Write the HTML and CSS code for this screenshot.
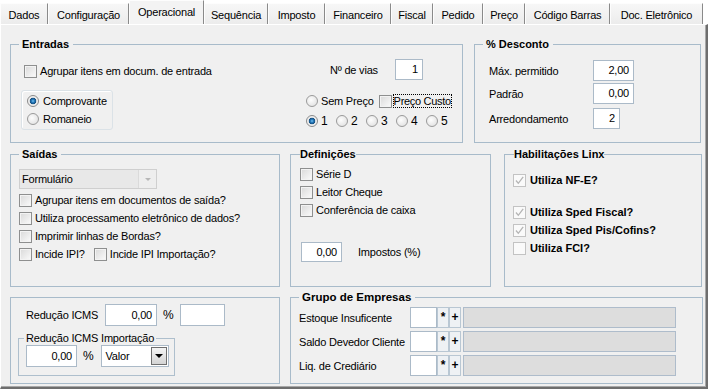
FILE: index.html
```html
<!DOCTYPE html>
<html lang="pt-BR">
<head>
    <meta charset="UTF-8">
    <title>Parâmetros - Operacional</title>
    <link rel="stylesheet" href="styles.css">
</head>
<body>
    <div class="window">
        <div class="tabs">
            <div class="tab">Dados</div>
            <div class="tab">Configuração</div>
            <div class="tab active">Operacional</div>
            <div class="tab">Sequência</div>
            <div class="tab">Imposto</div>
            <div class="tab">Financeiro</div>
            <div class="tab">Fiscal</div>
            <div class="tab">Pedido</div>
            <div class="tab">Preço</div>
            <div class="tab">Código Barras</div>
            <div class="tab">Doc. Eletrônico</div>
        </div>

        <div class="panel">
            <!-- linha 1 -->
            <div class="row row-top">
                <fieldset class="group g-entradas">
                    <legend>Entradas</legend>
                    <div class="ent-body">
                        <div class="ent-left">
                            <label class="chk pad3"><span class="box"></span>Agrupar itens em docum. de entrada</label>
                            <div class="radio-box">
                                <label class="opt"><span class="radio on"></span>Comprovante</label>
                                <label class="opt"><span class="radio"></span>Romaneio</label>
                            </div>
                        </div>
                        <div class="ent-right">
                            <div class="vias">
                                <span class="vias-label">Nº de vias</span>
                                <span class="field num w-vias">1</span>
                            </div>
                            <div class="preco-row">
                                <label class="opt"><span class="radio"></span>Sem Preço</label>
                                <label class="chk custo"><span class="box"></span><span class="focus">Preço Custo</span></label>
                            </div>
                            <div class="nums">
                                <label class="opt num-opt"><span class="radio on"></span>1</label>
                                <label class="opt num-opt"><span class="radio"></span>2</label>
                                <label class="opt num-opt"><span class="radio"></span>3</label>
                                <label class="opt num-opt"><span class="radio"></span>4</label>
                                <label class="opt num-opt"><span class="radio"></span>5</label>
                            </div>
                        </div>
                    </div>
                </fieldset>

                <fieldset class="group g-desconto">
                    <legend>% Desconto</legend>
                    <div class="desc-body">
                        <div class="desc-row">
                            <span class="desc-label">Máx. permitido</span>
                            <span class="field num w-desc">2,00</span>
                        </div>
                        <div class="desc-row">
                            <span class="desc-label">Padrão</span>
                            <span class="field num w-desc">0,00</span>
                        </div>
                        <div class="desc-row round">
                            <span class="desc-label">Arredondamento</span>
                            <span class="field num w-arred">2</span>
                        </div>
                    </div>
                </fieldset>
            </div>

            <!-- linha 2 -->
            <div class="row row-mid">
                <fieldset class="group g-saidas">
                    <legend>Saídas</legend>
                    <div class="saidas-body">
                        <div class="combo disabled w-form">
                            <span class="combo-text">Formulário</span>
                            <span class="combo-btn"><span class="arrow"></span></span>
                        </div>
                        <label class="chk row18"><span class="box"></span>Agrupar itens em documentos de saída?</label>
                        <label class="chk row18"><span class="box"></span>Utiliza processamento eletrônico de dados?</label>
                        <label class="chk row18"><span class="box"></span>Imprimir linhas de Bordas?</label>
                        <div class="ipi-row">
                            <label class="chk row18"><span class="box"></span>Incide IPI?</label>
                            <label class="chk row18"><span class="box"></span>Incide IPI Importação?</label>
                        </div>
                    </div>
                </fieldset>

                <fieldset class="group g-defs tight">
                    <legend>Definições</legend>
                    <div class="defs-body">
                        <label class="chk row18"><span class="box"></span>Série D</label>
                        <label class="chk row18"><span class="box"></span>Leitor Cheque</label>
                        <label class="chk row18"><span class="box"></span>Conferência de caixa</label>
                        <div class="impostos">
                            <span class="field num w-imp">0,00</span>
                            <span>Impostos (%)</span>
                        </div>
                    </div>
                </fieldset>

                <fieldset class="group g-linx tight">
                    <legend>Habilitações Linx</legend>
                    <div class="linx-body">
                        <label class="chk row18 strong nfe"><span class="box off checked"><svg width="11" height="11" viewBox="0 0 11 11"><path d="M2 5.5 L4.3 8.3 L9.2 1.8" fill="none" stroke="#b4b4b4" stroke-width="1.3"/></svg></span>Utiliza NF-E?</label>
                        <label class="chk row18 strong sped"><span class="box off checked"><svg width="11" height="11" viewBox="0 0 11 11"><path d="M2 5.5 L4.3 8.3 L9.2 1.8" fill="none" stroke="#b4b4b4" stroke-width="1.3"/></svg></span>Utiliza Sped Fiscal?</label>
                        <label class="chk row18 strong"><span class="box off checked"><svg width="11" height="11" viewBox="0 0 11 11"><path d="M2 5.5 L4.3 8.3 L9.2 1.8" fill="none" stroke="#b4b4b4" stroke-width="1.3"/></svg></span>Utiliza Sped Pis/Cofins?</label>
                        <label class="chk row18 strong"><span class="box off"></span>Utiliza FCI?</label>
                    </div>
                </fieldset>
            </div>

            <!-- linha 3 -->
            <div class="row row-bottom">
                <fieldset class="group plain g-icms">
                    <div class="icms-row">
                        <span class="icms-label">Redução ICMS</span>
                        <span class="field num w-icms">0,00</span>
                        <span class="pct">%</span>
                        <span class="field w-icms2"></span>
                    </div>
                    <fieldset class="group inner">
                        <legend>Redução ICMS Importação</legend>
                        <div class="inner-body">
                            <span class="field num w-icms-imp">0,00</span>
                            <span class="pct">%</span>
                            <div class="combo w-valor">
                                <span class="combo-text">Valor</span>
                                <span class="combo-btn dark"><span class="arrow"></span></span>
                            </div>
                        </div>
                    </fieldset>
                </fieldset>

                <fieldset class="group g-grupo">
                    <legend>Grupo de Empresas</legend>
                    <div class="grupo-body">
                        <div class="emp-row">
                            <span class="emp-label">Estoque Insuficente</span>
                            <span class="field w-cod"></span>
                            <span class="mini">*</span>
                            <span class="mini">+</span>
                            <span class="field gray w-desc-emp"></span>
                        </div>
                        <div class="emp-row">
                            <span class="emp-label">Saldo Devedor Cliente</span>
                            <span class="field w-cod"></span>
                            <span class="mini">*</span>
                            <span class="mini">+</span>
                            <span class="field gray w-desc-emp"></span>
                        </div>
                        <div class="emp-row">
                            <span class="emp-label">Liq. de Crediário</span>
                            <span class="field w-cod"></span>
                            <span class="mini">*</span>
                            <span class="mini">+</span>
                            <span class="field gray w-desc-emp"></span>
                        </div>
                    </div>
                </fieldset>
            </div>
        </div>
    </div>
</body>
</html>
```

FILE: styles.css
```css
body {
    margin: 0;
    background: #fff;
    font-family: "Liberation Sans", Arial, sans-serif;
    font-size: 11px;
    letter-spacing: -0.2px;
    color: #000;
}
.window {
    width: 708px;
}

/* abas */
.tabs {
    display: flex;
    align-items: flex-end;
    height: 24px;
}
.tab {
    box-sizing: border-box;
    height: 21px;
    display: flex;
    align-items: center;
    justify-content: center;
    border-top: 1px solid #fdfdfd;
    border-left: 1px solid #fdfdfd;
    border-right: 1px solid #8a8a8a;
    background: linear-gradient(#f7f7f7, #ececec);
    padding-top: 1px;
}
.tab.active {
    height: 24px;
    background: #f3f3f3;
    padding-top: 0;
    padding-bottom: 2px;
}
.tab:nth-child(1) { width: 48px; }
.tab:nth-child(2) { width: 81px; }
.tab:nth-child(3) { width: 75px; }
.tab:nth-child(4) { width: 64px; }
.tab:nth-child(5) { width: 57px; }
.tab:nth-child(6) { width: 66px; }
.tab:nth-child(7) { width: 42px; }
.tab:nth-child(8) { width: 50px; }
.tab:nth-child(9) { width: 42px; }
.tab:nth-child(10) { width: 85px; }
.tab:nth-child(11) { width: 93px; }

.panel {
    box-sizing: border-box;
    height: 365px;
    background: #f0f0f0;
    border-top: 1px solid #fff;
    border-left: 1px solid #fff;
    border-right: 2px solid #6e6e6e;
    border-bottom: 2px solid #6e6e6e;
    box-shadow: inset -1px -1px 0 #a8a8a8;
    padding: 12px 0 0 9px;
}
.row {
    display: flex;
}
.row-top { height: 106px; }
.row-mid { height: 140px; margin-top: 4px; }
.row-bottom { height: 94px; margin-top: 3px; }

/* group box */
.group {
    box-sizing: border-box;
    margin: 0;
    padding: 0;
    min-width: 0;
    border: 1px solid #a8bbca;
}
.group legend {
    font-weight: bold;
    letter-spacing: 0;
    line-height: 14px;
    padding: 0 4px 0 3px;
    margin-left: 8px;
}
.group.tight legend {
    padding: 0;
    margin-left: 9px;
}
.group.plain {
    margin-top: 7px;
}

.g-entradas { width: 453px; }
.g-desconto { width: 227px; margin-left: 11px; }
.g-saidas { width: 270px; }
.g-defs { width: 201px; margin-left: 10px; }
.g-linx { width: 198px; margin-left: 13px; }
.g-icms { width: 270px; }
.g-grupo { width: 413px; margin-left: 10px; }

/* controles */
.chk, .opt {
    display: flex;
    align-items: center;
    white-space: nowrap;
}
.chk { height: 16px; gap: 3px; }
.opt { height: 18px; gap: 4px; }
.row18 { height: 18px; }
.pad3 { padding-left: 3px; }
.strong { font-weight: bold; gap: 4px; letter-spacing: 0; }

.box {
    box-sizing: border-box;
    width: 13px;
    height: 13px;
    flex: none;
    border: 1px solid #8e8f8f;
    background: linear-gradient(135deg, #d9d9d9, #fbfbfb);
    box-shadow: inset 0 0 0 1px #f3f3f3;
    display: flex;
    align-items: center;
    justify-content: center;
}
.box.off {
    border-color: #c3c3c3;
    background: #fafafa;
    box-shadow: none;
}
.box svg { display: block; }

.radio {
    box-sizing: border-box;
    width: 12px;
    height: 12px;
    flex: none;
    border-radius: 50%;
    border: 1px solid #9a9a9a;
    background: radial-gradient(circle at 40% 40%, #fdfdfd, #dcdcdc);
}
.radio.on {
    border-color: #8a8a8a;
    background: radial-gradient(circle at 50% 50%, #74c4f2 0, #2577b8 1.6px, #154f80 3px, #e9e9e9 3.6px, #f8f8f8 6px);
}

.field {
    box-sizing: border-box;
    display: block;
    height: 21px;
    line-height: 19px;
    background: #fff;
    border: 1px solid #abbac8;
    padding: 0 4px;
    flex: none;
}
.field.num { text-align: right; }
.field.gray { background: #dddddd; border-color: #aebccb; }

.combo {
    box-sizing: border-box;
    display: flex;
    height: 22px;
    background: #fff;
    border: 1px solid #abbac8;
    flex: none;
}
.combo-text {
    flex: 1;
    line-height: 20px;
    padding-left: 3px;
}
.combo-btn {
    width: 17px;
    display: flex;
    align-items: center;
    justify-content: center;
    border-left: 1px solid #e0e0e0;
}
.combo-btn .arrow {
    width: 0;
    height: 0;
    border-left: 3px solid transparent;
    border-right: 3px solid transparent;
    border-top: 3px solid #b7b7b7;
}
.combo.disabled {
    height: 20px;
    background: #e8e8e8;
    border-color: #cfcfcf;
}
.combo.disabled .combo-text { line-height: 18px; padding-left: 2px; }
.combo.disabled .combo-btn { background: #eeeeee; border-left-color: #dadada; }
.combo-btn.dark {
    margin: 1px;
    width: 16px;
    border: 1px solid #6f6f6f;
    background: linear-gradient(#f4f4f4, #d4d4d4);
    box-sizing: border-box;
}
.combo-btn.dark .arrow {
    border-left-width: 4px;
    border-right-width: 4px;
    border-top: 4px solid #000;
}

/* entradas */
.ent-body {
    display: flex;
    height: 90px;
}
.ent-left {
    margin-left: 10px;
    padding-top: 12px;
}
.radio-box {
    box-sizing: border-box;
    width: 92px;
    height: 40px;
    margin-top: 11px;
    padding: 1px 0 0 5px;
    border: 1px solid #dbe2e7;
    border-radius: 3px;
    box-shadow: inset 1px 1px 0 #fff;
}
.ent-right {
    width: 150px;
    margin-left: auto;
    margin-right: 6px;
    padding-top: 8px;
}
.vias {
    display: flex;
    align-items: center;
    margin-left: 24px;
}
.vias-label { width: 65px; }
.w-vias { width: 28px; }
.preco-row {
    display: flex;
    align-items: center;
    height: 16px;
    margin-top: 13px;
}
.preco-row .opt { gap: 3px; }
.custo { margin-left: 5px; gap: 1px; }
.focus {
    border: 1px dotted #000;
    line-height: 12px;
    padding: 0;
    letter-spacing: -0.3px;
}
.nums {
    display: flex;
    margin-top: 3px;
}
.num-opt {
    width: 32px;
    gap: 3px;
    font-size: 12px;
}

/* desconto */
.desc-body {
    padding: 9px 0 0 14px;
}
.desc-row {
    display: flex;
    align-items: center;
}
.desc-row + .desc-row { margin-top: 2px; }
.desc-row.round { margin-top: 4px; }
.desc-label { width: 104px; }
.w-desc { width: 41px; }
.w-arred { width: 27px; }

/* saidas */
.saidas-body {
    padding: 8px 0 0 8px;
}
.w-form { width: 138px; margin-bottom: 2px; }
.ipi-row {
    display: flex;
    gap: 9px;
}

/* definicoes */
.defs-body {
    padding: 4px 0 0 9px;
}
.impostos {
    display: flex;
    align-items: center;
    gap: 16px;
    margin-top: 23px;
    margin-left: 1px;
}
.w-imp { width: 41px; height: 20px; line-height: 18px; }

/* habilitacoes */
.linx-body {
    padding: 10px 0 0 8px;
}
.linx-body .nfe { margin-bottom: 14px; }

/* icms */
.icms-row {
    display: flex;
    align-items: center;
    margin: 6px 0 0 15px;
}
.icms-label { width: 79px; }
.w-icms { width: 52px; height: 22px; line-height: 20px; }
.w-icms2 { width: 45px; height: 22px; }
.pct { margin: 0 7px 0 6px; font-size: 12px; }
.group.inner {
    width: 157px;
    height: 45px;
    margin: 5px 0 0 7px;
    border-color: #aebfcd;
}
.group.inner legend {
    font-weight: normal;
    letter-spacing: -0.2px;
    padding: 0 2px;
    margin-left: 5px;
}
.inner-body {
    display: flex;
    align-items: center;
    padding-left: 7px;
}
.w-icms-imp { width: 51px; height: 22px; line-height: 20px; }
.inner-body .pct { margin: 0 8px 0 6px; }
.w-valor { width: 68px; }

/* grupo de empresas */
.g-grupo legend {
    font-size: 11.5px;
}
.grupo-body {
    padding: 3px 0 0 8px;
}
.emp-row {
    display: flex;
    align-items: center;
    height: 21px;
}
.emp-row + .emp-row { margin-top: 3px; }
.emp-label { width: 111px; }
.w-cod { width: 27px; }
.mini {
    box-sizing: border-box;
    width: 12px;
    height: 21px;
    line-height: 19px;
    text-align: center;
    font-weight: bold;
    font-size: 12px;
    border: 1px solid #b9c7d3;
    background: #eef1f4;
}
.w-desc-emp { width: 213px; margin-left: 2px; }
```
